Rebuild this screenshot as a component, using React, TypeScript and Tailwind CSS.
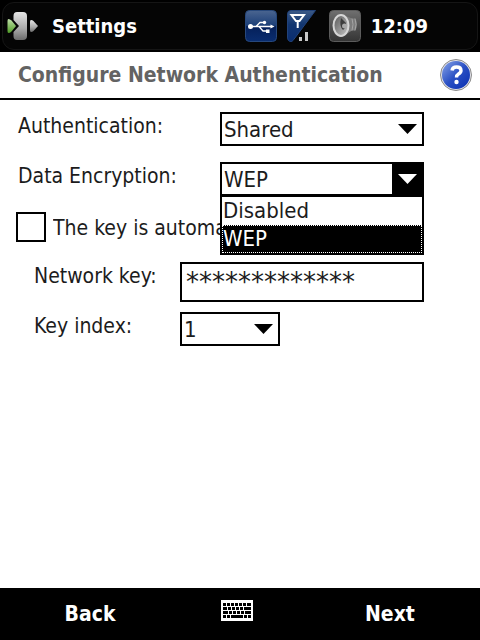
import React, { useState } from 'react';

const ENCRYPTION_OPTIONS = ['Disabled', 'WEP'];

const KEYBOARD_KEYS = [
  // [x, y, width]
  [2, 3, 3], [6, 3, 3], [10, 3, 3], [14, 3, 3], [18, 3, 3], [22, 3, 3], [26, 3, 4],
  [2, 7, 4], [7, 7, 3], [11, 7, 3], [15, 7, 3], [19, 7, 3], [23, 7, 7],
  [2, 11, 5], [8, 11, 3], [12, 11, 3], [16, 11, 3], [20, 11, 3], [24, 11, 6],
  [2, 15, 3], [6, 15, 3], [10, 15, 12], [23, 15, 3], [27, 15, 3],
];

const ConnectionIcon = () => (
  <svg width="32" height="30" viewBox="0 0 32 30" aria-hidden="true">
    <defs>
      <linearGradient id="bar" x1="0" y1="0" x2="0" y2="1">
        <stop offset="0" stopColor="#e6e6e6" />
        <stop offset="0.6" stopColor="#a8a8a8" />
        <stop offset="1" stopColor="#6c6c6c" />
      </linearGradient>
      <linearGradient id="plug" x1="0" y1="0" x2="0" y2="1">
        <stop offset="0" stopColor="#c0e0a8" />
        <stop offset="1" stopColor="#4f9c26" />
      </linearGradient>
    </defs>
    <path d="M10 1h6q4 0 4 4v20q0 4-4 4h-6q-3.500 0-3.500-4v-4l5.500-6-5.500-6V5q0-4 3.500-4z" fill="url(#bar)" />
    <path d="M1.500 8q1.500 0 3 1.500L9 15l-4.500 5.500Q3 22 1.500 22 .5 22 .5 20V10q0-2 1-2z" fill="url(#plug)" />
    <path d="M24 9q1.500 0 2.500 1L31 15l-4.500 5q-1 1-2.500 1-1 0-1-2v-8q0-2 1-2z" fill="url(#bar)" />
  </svg>
);

const UsbIcon = () => (
  <svg width="32" height="32" viewBox="0 0 32 32" aria-hidden="true">
    <defs>
      <linearGradient id="usb" x1="0" y1="0" x2="0" y2="1">
        <stop offset="0" stopColor="#4a6590" />
        <stop offset="0.48" stopColor="#1c3f78" />
        <stop offset="0.52" stopColor="#05205a" />
        <stop offset="1" stopColor="#0a2d70" />
      </linearGradient>
    </defs>
    <rect x="0.500" y="0.500" width="31" height="31" rx="4" fill="url(#usb)" stroke="#27487c" />
    <path d="M6 16.500h20M11 16.500l4-4h4M14 16.500l4 4.500h4" fill="none" stroke="#fff" strokeWidth="1.300" />
    <circle cx="5.500" cy="16.500" r="2.500" fill="#fff" />
    <circle cx="19.500" cy="12.500" r="1.700" fill="#fff" />
    <rect x="21" y="19.500" width="3.500" height="3.500" fill="#fff" />
    <path d="M25.500 14.500l4 2-4 2z" fill="#fff" />
  </svg>
);

const SignalIcon = () => (
  <svg width="32" height="32" viewBox="0 0 32 32" aria-hidden="true">
    <defs>
      <linearGradient id="signal" x1="0" y1="0" x2="0" y2="1">
        <stop offset="0" stopColor="#3c5a86" />
        <stop offset="0.45" stopColor="#123670" />
        <stop offset="1" stopColor="#0a2d70" />
      </linearGradient>
    </defs>
    <path d="M4 0.500H28.500L6 30.500Q5 31.500 4 31.500 0.500 31.500 0.500 27V4Q0.500 0.500 4 0.500Z" fill="url(#signal)" stroke="#21427a" />
    <path d="M4.500 5h12.500l-4.500 6H9zM10.700 10v8" fill="none" stroke="#fff" strokeWidth="2" />
    <rect x="12" y="27" width="3" height="4" fill="#c8c8c8" />
    <rect x="18" y="22" width="3" height="9" fill="#c8c8c8" />
  </svg>
);

const SpeakerIcon = () => (
  <svg width="32" height="32" viewBox="0 0 32 32" aria-hidden="true">
    <defs>
      <linearGradient id="speaker" x1="0" y1="0" x2="0" y2="1">
        <stop offset="0" stopColor="#707070" />
        <stop offset="0.5" stopColor="#505050" />
        <stop offset="1" stopColor="#353535" />
      </linearGradient>
      <linearGradient id="cone" x1="0" y1="0" x2="1" y2="1">
        <stop offset="0" stopColor="#555" />
        <stop offset="1" stopColor="#c8c8c8" />
      </linearGradient>
    </defs>
    <rect x="0.500" y="0.500" width="31" height="31" rx="4" fill="url(#speaker)" stroke="#5c5c5c" />
    <path d="M14 5l9 3.500h3q2 2 2 6t-2 6h-3L14 26z" fill="#7c7c7c" />
    <path d="M23 8.500q2 6 0 12M26 8.500q2 6 0 12" fill="none" stroke="#a4a4a4" />
    <ellipse cx="12" cy="15.500" rx="7.500" ry="10.500" fill="url(#cone)" stroke="#d6d6d6" strokeWidth="2" />
    <path d="M12 8l5 5v4l-3 3q-4-4-2-12z" fill="#3c3c3c" />
    <circle cx="15.500" cy="16" r="2.500" fill="#a8a8a8" />
  </svg>
);

const HelpIcon = () => (
  <svg width="32" height="32" viewBox="0 0 32 32" aria-hidden="true">
    <defs>
      <linearGradient id="help" x1="0" y1="0" x2="1" y2="1">
        <stop offset="0" stopColor="#8aa6e8" />
        <stop offset="0.5" stopColor="#2a50c4" />
        <stop offset="1" stopColor="#0a2fb0" />
      </linearGradient>
    </defs>
    <circle cx="16" cy="16" r="15.500" fill="#e4e4ea" stroke="#8a8a8a" />
    <circle cx="16" cy="16" r="14" fill="url(#help)" />
    <path d="M12 11.500q.5-3.500 4.500-3.500 4.500 0 4.500 3.500 0 2-2.500 3.500-2 1.200-2 3.500" fill="none" stroke="#fff" strokeWidth="3.400" />
    <circle cx="16.500" cy="23" r="2.200" fill="#fff" />
  </svg>
);

const KeyboardIcon = () => (
  <svg width="32" height="21" viewBox="0 0 32 21" shapeRendering="crispEdges" aria-hidden="true">
    <rect width="32" height="21" rx="1" fill="#fff" />
    {KEYBOARD_KEYS.map(([x, y, w]) => (
      <rect key={`${x}-${y}`} x={x} y={y} width={w} height="3" fill="#000" />
    ))}
  </svg>
);

interface SelectBoxProps {
  id: string;
  value: string;
  options: string[];
  open?: boolean;
  onChange: (value: string) => void;
}

const SelectBox: React.FC<SelectBoxProps> = ({ id, value, options, open, onChange }) => (
  <div className="relative">
    <select
      id={id}
      value={value}
      onChange={(e) => onChange(e.target.value)}
      className="block h-[34px] w-full appearance-none border-2 border-black bg-white pl-0.5 pr-8 pt-0.5 text-[22px] leading-7 outline-none"
    >
      {options.map((o) => (
        <option key={o}>{o}</option>
      ))}
    </select>
    <span
      className={`pointer-events-none absolute inset-y-0 right-0 flex w-8 items-center justify-center pr-0.5 ${
        open ? 'bg-black text-white' : 'text-black'
      }`}
    >
      <svg width="19" height="10" viewBox="0 0 19 10" fill="currentColor" aria-hidden="true">
        <path d="M0 0h19l-9.500 10z" />
      </svg>
    </span>
    {open && (
      <ul role="listbox" className="absolute inset-x-0 top-[33px] z-10 border-2 border-black bg-white text-[22px] leading-7">
        {options.map((o) => (
          <li
            key={o}
            role="option"
            aria-selected={o === value}
            onClick={() => onChange(o)}
            className={
              o === value
                ? 'bg-black px-px text-white outline-1 -outline-offset-1 outline-dotted outline-white'
                : 'px-px'
            }
          >
            {o}
          </li>
        ))}
      </ul>
    )}
  </div>
);

const App: React.FC = () => {
  const [auth, setAuth] = useState('Shared');
  const [encryption, setEncryption] = useState('WEP');
  const [listOpen, setListOpen] = useState(true);
  const [automatic, setAutomatic] = useState(false);
  const [networkKey, setNetworkKey] = useState('*************');
  const [keyIndex, setKeyIndex] = useState('1');

  const handleEncryption = (value: string) => {
    setEncryption(value);
    setListOpen(false);
  };

  return (
    <div className="flex min-h-screen flex-col bg-white font-['DejaVu_Sans_Condensed','DejaVu_Sans',sans-serif] text-[21px] leading-7 text-[#1c1c1c]">
      {/* Status bar */}
      <header className="bg-black p-0.5 text-white">
        <div className="flex h-12 items-center rounded-xl border border-[#151515] bg-[#050505] pl-1 pr-[49px] text-[20px] font-bold">
          <ConnectionIcon />
          <span className="ml-[13px]">Settings</span>
          <div className="ml-auto flex items-center gap-2.5">
            <UsbIcon />
            <SignalIcon />
            <SpeakerIcon />
            <span>12:09</span>
          </div>
        </div>
      </header>

      {/* Page title */}
      <div className="flex h-12 items-center justify-between border-b-2 border-black pl-[18px] pr-2">
        <h1 className="font-bold text-[#636363]">Configure Network Authentication</h1>
        <button type="button" aria-label="Help">
          <HelpIcon />
        </button>
      </div>

      <main className="flex-1 pl-[18px] pr-14 pt-3">
        <div className="flex items-start">
          <label htmlFor="auth" className="w-[202px] shrink-0">Authentication:</label>
          <div className="flex-1">
            <SelectBox id="auth" value={auth} options={['Open', 'Shared']} onChange={setAuth} />
          </div>
        </div>

        <div className="mt-4 flex items-start">
          <label htmlFor="encryption" className="w-[202px] shrink-0">Data Encryption:</label>
          <div className="flex-1">
            <SelectBox
              id="encryption"
              value={encryption}
              options={ENCRYPTION_OPTIONS}
              open={listOpen}
              onChange={handleEncryption}
            />
          </div>
        </div>

        <div className="-ml-0.5 mt-4 flex items-center gap-[7px]">
          <input
            id="automatic"
            type="checkbox"
            checked={automatic}
            onChange={(e) => setAutomatic(e.target.checked)}
            className="size-[30px] shrink-0 appearance-none border-2 border-black bg-white checked:bg-black"
          />
          {/* The open list covers the end of this label */}
          <label
            htmlFor="automatic"
            className={`overflow-hidden whitespace-nowrap pt-0.5 ${listOpen ? 'w-[167px]' : ''}`}
          >
            The key is automatic
          </label>
        </div>

        <div className="mt-5 flex items-start pl-4">
          <label htmlFor="network-key" className="w-[146px] shrink-0">Network key:</label>
          <input
            id="network-key"
            type="text"
            value={networkKey}
            onChange={(e) => setNetworkKey(e.target.value)}
            className="h-10 min-w-0 flex-1 border-2 border-black bg-white px-1 font-['DejaVu_Sans',sans-serif] text-[26px] outline-none"
          />
        </div>

        <div className="mt-2.5 flex items-start pl-4">
          <label htmlFor="key-index" className="w-[146px] shrink-0">Key index:</label>
          <div className="w-[100px]">
            <SelectBox id="key-index" value={keyIndex} options={['1', '2', '3', '4']} onChange={setKeyIndex} />
          </div>
        </div>
      </main>

      {/* Soft keys */}
      <footer className="grid h-[52px] grid-cols-[3fr_2fr_3fr] bg-black font-bold text-white">
        <button type="button">Back</button>
        <button type="button" aria-label="Keyboard" className="flex items-start justify-center pr-1.5 pt-3">
          <KeyboardIcon />
        </button>
        <button type="button">Next</button>
      </footer>
    </div>
  );
};

export default App;
